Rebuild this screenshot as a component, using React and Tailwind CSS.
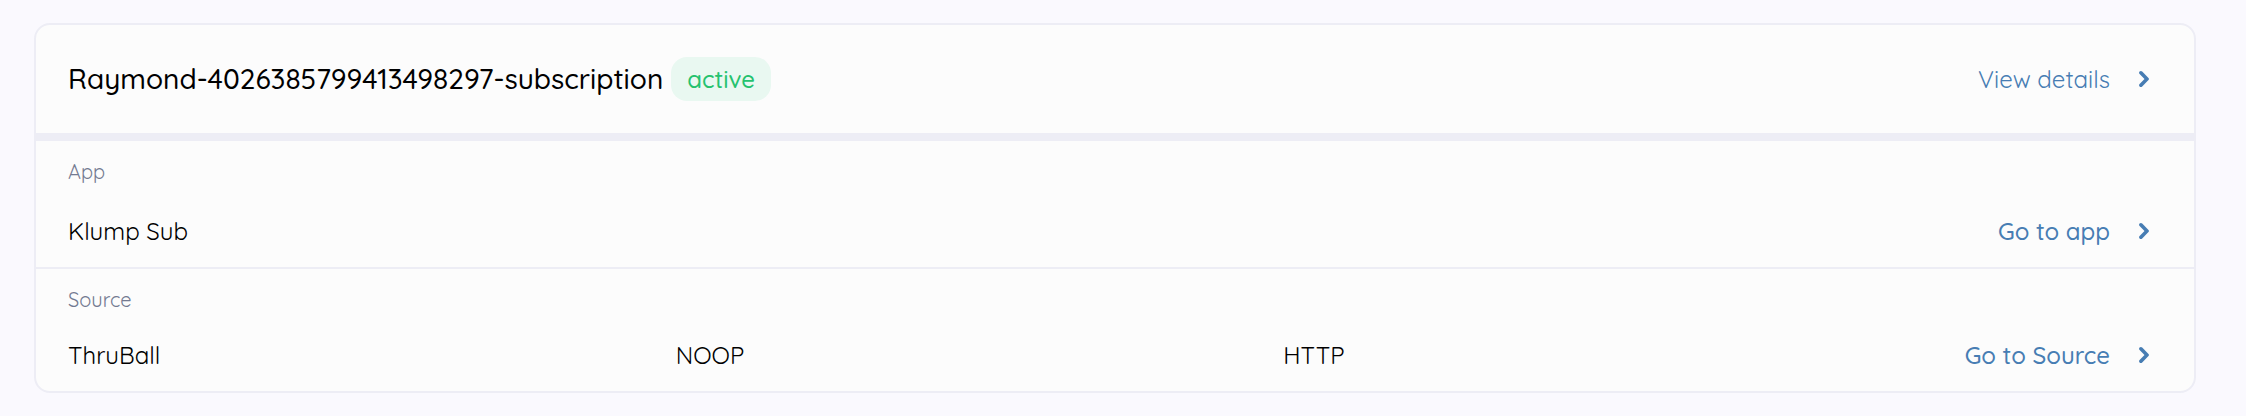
function Chevron() {
  return (
    <svg viewBox="0 0 10 16" className="h-4 w-[10px] shrink-0" fill="currentColor" aria-hidden="true">
      <path d="M.6.6C1.3-.1 2.500-.1 3.200.6L9.500 7C10.100 7.600 10.100 8.400 9.500 9L3.200 15.400C2.500 16.100 1.300 16.100.6 15.400C-.1 14.700-.1 13.700.6 13L5.500 8L.6 3C-.1 2.300-.1 1.300.6.6Z" />
    </svg>
  );
}

function ActionLink({ href, children, className = "font-medium" }) {
  return (
    <a href={href} className={`flex items-center justify-end gap-[29px] whitespace-nowrap pr-[13px] text-[#477db3] ${className}`}>
      {children}
      <Chevron />
    </a>
  );
}

export default function App() {
  return (
    <main className="min-h-screen bg-[#faf9fe] pt-[23px] pr-[50px] pb-[23px] pl-[34px] font-['Quicksand','Lato',sans-serif] text-2xl/8 text-black">
      <article className="overflow-hidden rounded-2xl border-2 border-[#ededf5] bg-[#fcfcfc]">
        <header className="flex items-center justify-between border-b-8 border-[#ededf5] px-8 py-8">
          <div className="flex items-center gap-2">
            <h1 className="text-[28px]/[44px] font-medium">Raymond-4026385799413498297-subscription</h1>
            <span className="rounded-2xl bg-[#e9f8f1] px-4 py-[6px] font-medium text-[#25c26e]">active</span>
          </div>
          <ActionLink href="#details" className="font-normal">View details</ActionLink>
        </header>
        <section className="border-b-2 border-[#ededf5] px-8 pt-[17px] pb-5">
          <h2 className="text-xl/7 font-normal text-[#737a91]">App</h2>
          <div className="mt-[29px] flex items-center justify-between">
            <p>Klump Sub</p>
            <ActionLink href="#app">Go to app</ActionLink>
          </div>
        </section>
        <section className="px-8 pt-[17px] pb-5">
          <h2 className="text-xl/7 font-normal text-[#737a91]">Source</h2>
          <div className="mt-[25px] grid grid-cols-[1fr_1fr_1fr_271px] items-center">
            <p>ThruBall</p>
            <p>NOOP</p>
            <p>HTTP</p>
            <ActionLink href="#source">Go to Source</ActionLink>
          </div>
        </section>
      </article>
    </main>
  );
}
